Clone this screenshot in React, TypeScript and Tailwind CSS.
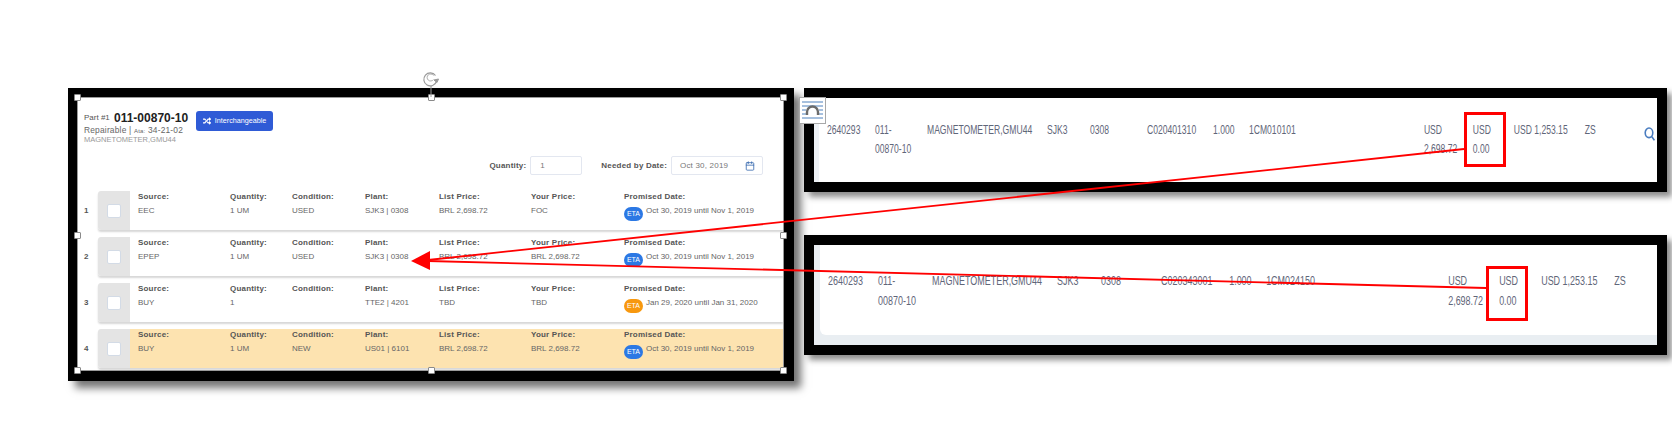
import { Calendar } from 'lucide-react';
import { FaRandom } from 'react-icons/fa';

interface PartRow {
  line: number;
  source: string;
  quantity: string;
  condition: string;
  plant: string;
  listPrice: string;
  yourPrice: string;
  dates: string;
  late?: boolean;
  highlight?: boolean;
}

const rows: PartRow[] = [
  { line: 1, source: 'EEC', quantity: '1 UM', condition: 'USED', plant: 'SJK3 | 0308', listPrice: 'BRL 2,698.72', yourPrice: 'FOC', dates: 'Oct 30, 2019 until Nov 1, 2019' },
  { line: 2, source: 'EPEP', quantity: '1 UM', condition: 'USED', plant: 'SJK3 | 0308', listPrice: 'BRL 2,698.72', yourPrice: 'BRL 2,698.72', dates: 'Oct 30, 2019 until Nov 1, 2019' },
  { line: 3, source: 'BUY', quantity: '1', condition: '', plant: 'TTE2 | 4201', listPrice: 'TBD', yourPrice: 'TBD', dates: 'Jan 29, 2020 until Jan 31, 2020', late: true },
  { line: 4, source: 'BUY', quantity: '1 UM', condition: 'NEW', plant: 'US01 | 6101', listPrice: 'BRL 2,698.72', yourPrice: 'BRL 2,698.72', dates: 'Oct 30, 2019 until Nov 1, 2019', highlight: true },
];

const handle = 'absolute w-[7px] h-[7px] bg-white border border-[#8a8a8a] rounded-[1px]';

function Field({ label, value, className }: { label: string; value: string; className: string }) {
  return (
    <div className={className}>
      <div className="text-[8px] leading-[10px] font-bold tracking-[0.2px] text-[#555]">{label}</div>
      <div className="mt-[4px] text-[8px] leading-[10px] text-[#666]">{value}</div>
    </div>
  );
}

function PartLine({ row }: { row: PartRow }) {
  return (
    <div className="flex items-center">
      <div className="w-[20px] pl-[6px] text-[8px] font-bold text-[#555]">{row.line}</div>
      <div className="flex-1 flex h-[39px] rounded-l-[3px] shadow-[0_2px_2px_rgba(0,0,0,0.16)] bg-white">
        <div className="w-[32px] flex items-center justify-center rounded-l-[3px] bg-[#e4e4e4]">
          <div className="w-[14px] h-[14px] rounded-[2px] bg-white border border-[#d3dbe6]" />
        </div>
        <div className={`flex-1 flex pl-[8px] pt-[1px] ${row.highlight ? 'bg-[#fde3b0]' : 'bg-white'}`}>
          <Field label="Source:" value={row.source} className="w-[92px]" />
          <Field label="Quantity:" value={row.quantity} className="w-[62px]" />
          <Field label="Condition:" value={row.condition} className="w-[73px]" />
          <Field label="Plant:" value={row.plant} className="w-[74px]" />
          <Field label="List Price:" value={row.listPrice} className="w-[92px]" />
          <Field label="Your Price:" value={row.yourPrice} className="w-[93px]" />
          <div className="flex-1">
            <div className="text-[8px] leading-[10px] font-bold tracking-[0.2px] text-[#555]">Promised Date:</div>
            <div className="mt-[4px] flex items-start gap-[3px]">
              <span className={`mt-[1px] w-[19px] h-[14px] flex items-center justify-center rounded-full text-[7px] text-white ${row.late ? 'bg-[#f7980f]' : 'bg-[#2b78e4]'}`}>
                ETA
              </span>
              <span className="text-[8px] leading-[10px] text-[#666]">{row.dates}</span>
            </div>
          </div>
        </div>
      </div>
    </div>
  );
}

function SourcePanel() {
  return (
    <div className="relative w-[726px] h-[293px] shrink-0 border-t-[9px] border-l-[9px] border-r-[10px] border-b-[10px] border-black shadow-[7px_7px_8px_rgba(0,0,0,0.55)]">
      <div className="h-full bg-white border border-[#9a9a9a] overflow-hidden">
        <div className="flex items-start pl-[6px] pt-[13px]">
          <div>
            <div className="flex items-center h-[14px] text-[#555]">
              <span className="text-[8px] w-[30px]">Part #1</span>
              <span className="text-[12px] font-bold text-[#222]">011-00870-10</span>
            </div>
            <div className="h-[10px] leading-[10px] text-[8.4px] tracking-[0.2px] text-[#666]">
              Repairable | <span className="text-[6px]">Ata:</span> 34-21-02
            </div>
            <div className="h-[10px] leading-[10px] text-[7.5px] text-[#999]">MAGNETOMETER,GMU44</div>
          </div>
          <div className="ml-[8px] h-[20px] w-[77px] flex items-center justify-center gap-[4px] rounded-[3px] bg-[#2f5bd6] text-white text-[7.2px]">
            <FaRandom className="w-[8px] h-[8px]" />
            Interchangeable
          </div>
        </div>
        <div className="mt-[11px] pr-[20px] flex items-center justify-end text-[8px]">
          <span className="font-bold tracking-[0.2px] text-[#555] mr-[4px]">Quantity:</span>
          <div className="w-[52px] h-[19px] flex items-center pl-[9px] rounded-[2px] border border-[#e3e7f0] text-[#777]">1</div>
          <span className="ml-[19px] font-bold tracking-[0.2px] text-[#555] mr-[4px]">Needed by Date:</span>
          <div className="w-[92px] h-[19px] flex items-center justify-between pl-[8px] pr-[7px] rounded-[2px] border border-[#e3e7f0] tracking-[0.2px] text-[#777]">
            Oct 30, 2019
            <Calendar className="w-[10px] h-[10px] text-[#3b6cb0]" strokeWidth={2} />
          </div>
        </div>
        <div className="mt-[16px] flex flex-col gap-[7px]">
          {rows.map(row => (
            <PartLine key={row.line} row={row} />
          ))}
        </div>
      </div>
      {/* selection handles */}
      <div className={`${handle} -left-[3px] -top-[3px]`} />
      <div className={`${handle} left-[351px] -top-[3px]`} />
      <div className={`${handle} -right-[3px] -top-[3px]`} />
      <div className={`${handle} -left-[3px] top-[135px]`} />
      <div className={`${handle} -right-[3px] top-[135px]`} />
      <div className={`${handle} -left-[3px] -bottom-[3px]`} />
      <div className={`${handle} left-[351px] -bottom-[3px]`} />
      <div className={`${handle} -right-[3px] -bottom-[3px]`} />
      <svg className="absolute left-[345px] -top-[26px] w-[18px] h-[26px]" viewBox="0 0 18 26" fill="none" stroke="#9a9a9a">
        <path d="M9 15v11" />
        <path d="M14.5 10.5a6.5 6.5 0 1 1-1-6" strokeWidth="1.2" />
        <path d="M11.5 8.5a3.5 3.5 0 1 1 0-4" strokeWidth="0.8" />
        <path d="M12 9l3 2.5 1.5-3.5z" fill="#9a9a9a" />
      </svg>
    </div>
  );
}

function TableRow({ cells, columns }: { cells: string[][]; columns: string }) {
  return (
    <div className={`grid ${columns} text-[13px] text-[#5f6679] whitespace-nowrap`}>
      {cells.map((lines, index) => (
        <div key={index}>
          {lines.map(text => (
            <div key={text}>{text}</div>
          ))}
        </div>
      ))}
    </div>
  );
}

function makeCells(batch: string, bin: string): string[][] {
  return [
    ['2640293'],
    ['011-', '00870-10'],
    ['MAGNETOMETER,GMU44'],
    ['SJK3'],
    ['0308'],
    [batch],
    ['1.000'],
    [bin],
    ['USD', '2,698.72'],
    ['USD', '0.00'],
    ['USD 1,253.15'],
    ['ZS'],
  ];
}

function LayoutIcon() {
  return (
    <svg className="absolute -left-[15px] -top-[1px] w-[27px] h-[27px]" viewBox="0 0 27 27">
      <rect x="0.5" y="0.5" width="26" height="26" fill="#fff" stroke="#a8a8a8" />
      <path d="M3 5h21M3 9h21M3 13h4M20 13h4M3 17h4M20 17h4M3 21h21" stroke="#4f81bd" strokeWidth="1" />
      <path d="M8 18v-3a5.5 5.5 0 0 1 11 0v3" fill="none" stroke="#6b6b6b" strokeWidth="2.4" />
    </svg>
  );
}

function RedBox({ className }: { className: string }) {
  return <div className={`absolute w-[42px] h-[55px] border-[3px] border-[#ff0000] ${className}`} />;
}

export default function App() {
  return (
    <div className="relative w-[1672px] h-[422px] bg-white overflow-hidden [font-family:'Liberation_Sans',sans-serif]">
      <div className="flex pl-[68px] pt-[88px] gap-[10px]">
        <SourcePanel />
        <div className="w-[863px] flex flex-col gap-[43px]">
          <div className="relative h-[104px] border-[10px] border-black shadow-[5px_5px_6px_rgba(0,0,0,0.45)]">
            <div className="h-full border-l-[5px] border-[#eef2f6] bg-white flex items-start pl-[8px] pt-[22px] overflow-hidden">
              <div className="w-[817px] shrink-0 leading-[19px]">
                <div className="w-[1130px] origin-top-left scale-x-[0.66]">
                  <TableRow
                    columns="grid-cols-[72.7px_78.8px_181.8px_65.2px_86.4px_100px_54.5px_265px_74.2px_62px_107.6px_30px]"
                    cells={makeCells('C020401310', '1CM010101')}
                  />
                </div>
              </div>
              <svg className="w-[11px] h-[14px] mt-[7px] shrink-0" viewBox="0 0 11 14" fill="none" stroke="#4a7dc0" strokeWidth="1.6" preserveAspectRatio="none">
                <ellipse cx="5" cy="5.8" rx="3.8" ry="4.8" />
                <path d="M7.8 9.6L10.4 13.4" />
              </svg>
            </div>
            <LayoutIcon />
            <RedBox className="left-[650px] top-[14px]" />
          </div>
          <div className="relative h-[120px] border-[10px] border-black shadow-[5px_5px_6px_rgba(0,0,0,0.45)]">
            <div className="h-full bg-[#e9eef2] pl-[6px] pb-[10px]">
              <div className="h-full rounded-bl-[6px] bg-white pl-[8px] pt-[26px] overflow-hidden leading-[20px]">
                <div className="w-[1130px] origin-top-left scale-x-[0.69]">
                  <TableRow
                    columns="grid-cols-[72.5px_78.3px_181.2px_63.8px_87px_98.6px_53.6px_263.8px_73.9px_60.9px_105.8px_30px]"
                    cells={makeCells('C020343001', '1CM024150')}
                  />
                </div>
              </div>
            </div>
            <RedBox className="left-[672px] top-[21px]" />
          </div>
        </div>
      </div>
      {/* annotation arrows */}
      <svg className="absolute inset-0 w-[1672px] h-[422px] pointer-events-none" viewBox="0 0 1672 422" fill="none">
        <path d="M1464 149L428 260" stroke="#ff0000" strokeWidth="1.8" />
        <path d="M1486 288L428 261" stroke="#ff0000" strokeWidth="1.8" />
        <path d="M411 261L430 251L430 270Z" fill="#ff0000" />
      </svg>
    </div>
  );
}
